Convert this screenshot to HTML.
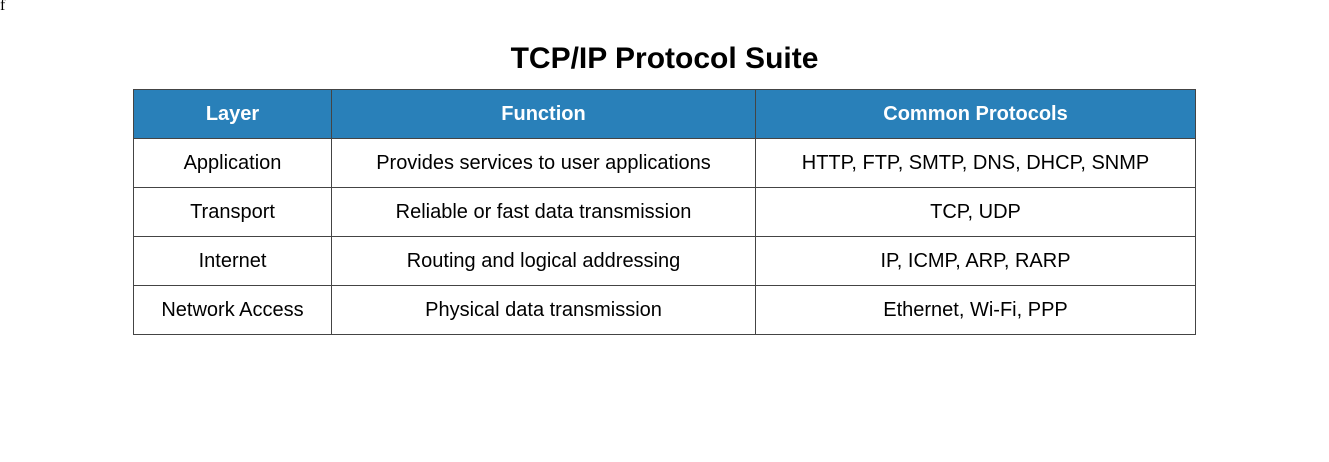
<!DOCTYPE html>
<html><head><style>
body{margin:0;width:1329px;height:462px;background:#fff;position:relative;font-family:"Liberation Sans",Arial,sans-serif;}
.f{position:absolute;left:0;top:-3px;font-family:"Liberation Serif",serif;font-size:16px;}
h1{position:absolute;top:40px;left:0;width:1329px;margin:0;text-align:center;font-size:30px;font-weight:bold;line-height:38px;color:#000;}
table{position:absolute;left:133px;top:89px;width:1063px;border-collapse:collapse;font-size:20px;line-height:20px;}
th,td{border:1px solid #444;text-align:center;height:48px;padding:0 0 1px 0;box-sizing:border-box;}
tr{height:49px;}
th{background:#2980b9;color:#fff;font-weight:bold;}
</style></head><body>
<div class="f">f</div>
<h1>TCP/IP Protocol Suite</h1>
<table>
<tr><th style="width:198px">Layer</th><th style="width:424px">Function</th><th>Common Protocols</th></tr>
<tr><td>Application</td><td>Provides services to user applications</td><td>HTTP, FTP, SMTP, DNS, DHCP, SNMP</td></tr>
<tr><td>Transport</td><td>Reliable or fast data transmission</td><td>TCP, UDP</td></tr>
<tr><td>Internet</td><td>Routing and logical addressing</td><td>IP, ICMP, ARP, RARP</td></tr>
<tr><td>Network Access</td><td>Physical data transmission</td><td>Ethernet, Wi-Fi, PPP</td></tr>
</table>
</body></html>
